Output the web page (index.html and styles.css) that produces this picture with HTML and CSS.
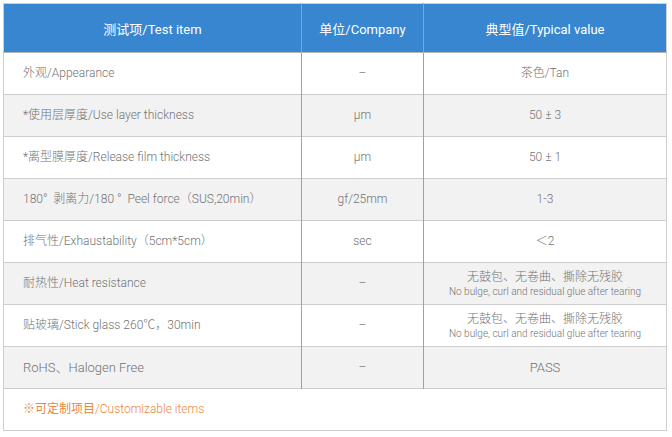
FILE: index.html
```html
<!DOCTYPE html>
<html>
<head>
<meta charset="utf-8">
<link rel="stylesheet" href="styles.css">
</head>
<body>
<table class="spec">
  <colgroup>
    <col class="c1"><col class="c2"><col class="c3">
  </colgroup>
  <thead>
    <tr>
      <th>测试项/Test item</th>
      <th>单位/Company</th>
      <th>典型值/Typical value</th>
    </tr>
  </thead>
  <tbody>
    <tr><td class="item">外观/Appearance</td><td>–</td><td>茶色/Tan</td></tr>
    <tr class="alt"><td class="item">*使用层厚度/Use layer thickness</td><td>μm</td><td>50 ± 3</td></tr>
    <tr><td class="item">*离型膜厚度/Release film thickness</td><td>μm</td><td>50 ± 1</td></tr>
    <tr class="alt"><td class="item">180°&nbsp; 剥离力/180 °&nbsp; Peel force（SUS,20min）</td><td>gf/25mm</td><td>1-3</td></tr>
    <tr><td class="item">排气性/Exhaustability（5cm*5cm）</td><td>sec</td><td>＜2</td></tr>
    <tr class="alt"><td class="item">耐热性/Heat resistance</td><td>–</td><td><div class="zh">无鼓包、无卷曲、撕除无残胶</div><div class="en">No bulge, curl and residual glue after tearing</div></td></tr>
    <tr><td class="item">贴玻璃/Stick glass 260℃，30min</td><td>–</td><td><div class="zh">无鼓包、无卷曲、撕除无残胶</div><div class="en">No bulge, curl and residual glue after tearing</div></td></tr>
    <tr class="alt"><td class="item big">RoHS、Halogen Free</td><td>–</td><td class="big">PASS</td></tr>
    <tr class="foot"><td colspan="3"><span class="mark">※可定制项目</span>/Customizable items</td></tr>
  </tbody>
</table>
</body>
</html>
```
FILE: styles.css
```css
body {
  margin: 0;
  padding: 3px;
  background: #ffffff;
  font-family: Roboto, "Noto Sans CJK SC", sans-serif;
  font-weight: 300;
  color: #737373;
}
.spec {
  border-collapse: collapse;
  table-layout: fixed;
  width: 663px;
  border: 1px solid #cfcfcf;
}
.c1 { width: 298px; }
.c2 { width: 122px; }
.c3 { width: 243px; }
.spec th {
  background: #3886d0;
  color: #ffffff;
  font-weight: 400;
  font-size: 13px;
  height: 48px;
  padding: 0;
  text-align: center;
  border-left: 1px solid #a0a0a0;
  border-bottom: 1px solid #b5b5b5;
}
.spec th:first-child { border-left: none; }
.spec td {
  height: 41px;
  padding: 0;
  font-size: 12px;
  text-align: center;
  border-left: 1px solid #a0a0a0;
  border-top: 1px solid #cdcdcd;
  line-height: 1.2;
}
.spec td:first-child { border-left: none; }
.spec td.item {
  text-align: left;
  padding-left: 19px;
}
.spec td.big { font-size: 13px; }
.alt td { background: #f2f2f2; }
.zh { font-size: 12px; line-height: 16px; }
.en { font-size: 10px; line-height: 13px; }
.foot td {
  text-align: left;
  padding-left: 19px;
  color: #e8873f;
  font-size: 12px;
}
.mark { font-weight: 400; }
```
